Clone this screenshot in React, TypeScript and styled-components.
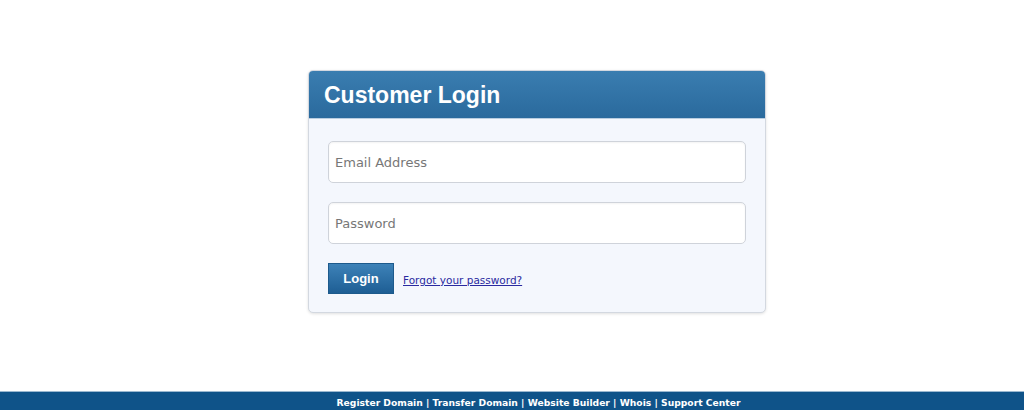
import React from "react";
import styled, { createGlobalStyle } from "styled-components";

const Global = createGlobalStyle`
  html, body { margin: 0; padding: 0; background: #ffffff; }
  body { font-family: "DejaVu Sans", Verdana, sans-serif; }
  * { box-sizing: border-box; }
`;

const Page = styled.div`
  display: flex;
  flex-direction: column;
  min-height: 410px;
`;

const Main = styled.main`
  flex: 1;
  display: flex;
  justify-content: center;
  align-items: flex-start;
  padding-top: 70px;
  padding-left: 50px;
`;

const Card = styled.section`
  width: 458px;
  border: 1px solid #d3d8e0;
  border-radius: 5px;
  background: #f4f7fd;
  box-shadow: 0 1px 3px rgba(0, 0, 0, 0.12);
  overflow: hidden;
`;

const Header = styled.header`
  height: 48px;
  display: flex;
  align-items: center;
  padding-left: 15px;
  background: linear-gradient(to bottom, #3a7db0, #2a6a9d);
  border-bottom: 1px solid #b9cde0;
`;

const Title = styled.h1`
  margin: 0;
  font-family: "Liberation Sans", Arial, sans-serif;
  font-size: 23px;
  font-weight: bold;
  color: #ffffff;
  padding-top: 2px;
`;

const Body = styled.form`
  display: flex;
  flex-direction: column;
  gap: 19px;
  padding: 22px 19px 18px 19px;
`;

const Input = styled.input`
  width: 418px;
  height: 42px;
  border: 1px solid #cfd3da;
  border-radius: 5px;
  background: #ffffff;
  padding: 0 6px;
  font-family: "DejaVu Sans", Verdana, sans-serif;
  font-size: 13px;
  color: #333;
  box-shadow: inset 0 1px 2px rgba(0, 0, 0, 0.05);
  outline: none;
  &::placeholder { color: #777777; }
`;

const Actions = styled.div`
  display: flex;
  align-items: center;
  gap: 9px;
`;

const Button = styled.button`
  width: 66px;
  height: 31px;
  border: 1px solid #1d5a8c;
  background: linear-gradient(to bottom, #3d82b8, #1e5e94);
  color: #ffffff;
  font-family: "Liberation Sans", Arial, sans-serif;
  font-size: 13px;
  font-weight: bold;
  cursor: pointer;
  padding: 0;
`;

const Link = styled.a`
  font-family: "DejaVu Sans", Verdana, sans-serif;
  font-size: 10.5px;
  color: #2a2aa0;
  text-decoration: underline;
  padding-top: 3px;
`;

const Footer = styled.footer`
  height: 19px;
  background: #0f5389;
  border-top: 1px solid #9bb8d0;
  display: flex;
  align-items: center;
  justify-content: center;
  padding-left: 53px;
`;

const FooterText = styled.div`
  font-family: "DejaVu Sans", Verdana, sans-serif;
  font-size: 9.2px;
  font-weight: bold;
  color: #ffffff;
  white-space: nowrap;
  padding-top: 2px;
`;

const FooterLink = styled.a`
  color: #ffffff;
  text-decoration: none;
`;

const links = ["Register Domain", "Transfer Domain", "Website Builder", "Whois", "Support Center"];

export default function App() {
  return (
    <>
      <Global />
      <Page>
        <Main>
          <Card>
            <Header>
              <Title>Customer Login</Title>
            </Header>
            <Body onSubmit={(e) => e.preventDefault()}>
              <Input type="email" placeholder="Email Address" />
              <Input type="password" placeholder="Password" />
              <Actions>
                <Button type="submit">Login</Button>
                <Link href="#">Forgot your password?</Link>
              </Actions>
            </Body>
          </Card>
        </Main>
        <Footer>
          <FooterText>
            {links.map((l, i) => (
              <React.Fragment key={l}>
                {i > 0 && " | "}
                <FooterLink href="#">{l}</FooterLink>
              </React.Fragment>
            ))}
          </FooterText>
        </Footer>
      </Page>
    </>
  );
}
